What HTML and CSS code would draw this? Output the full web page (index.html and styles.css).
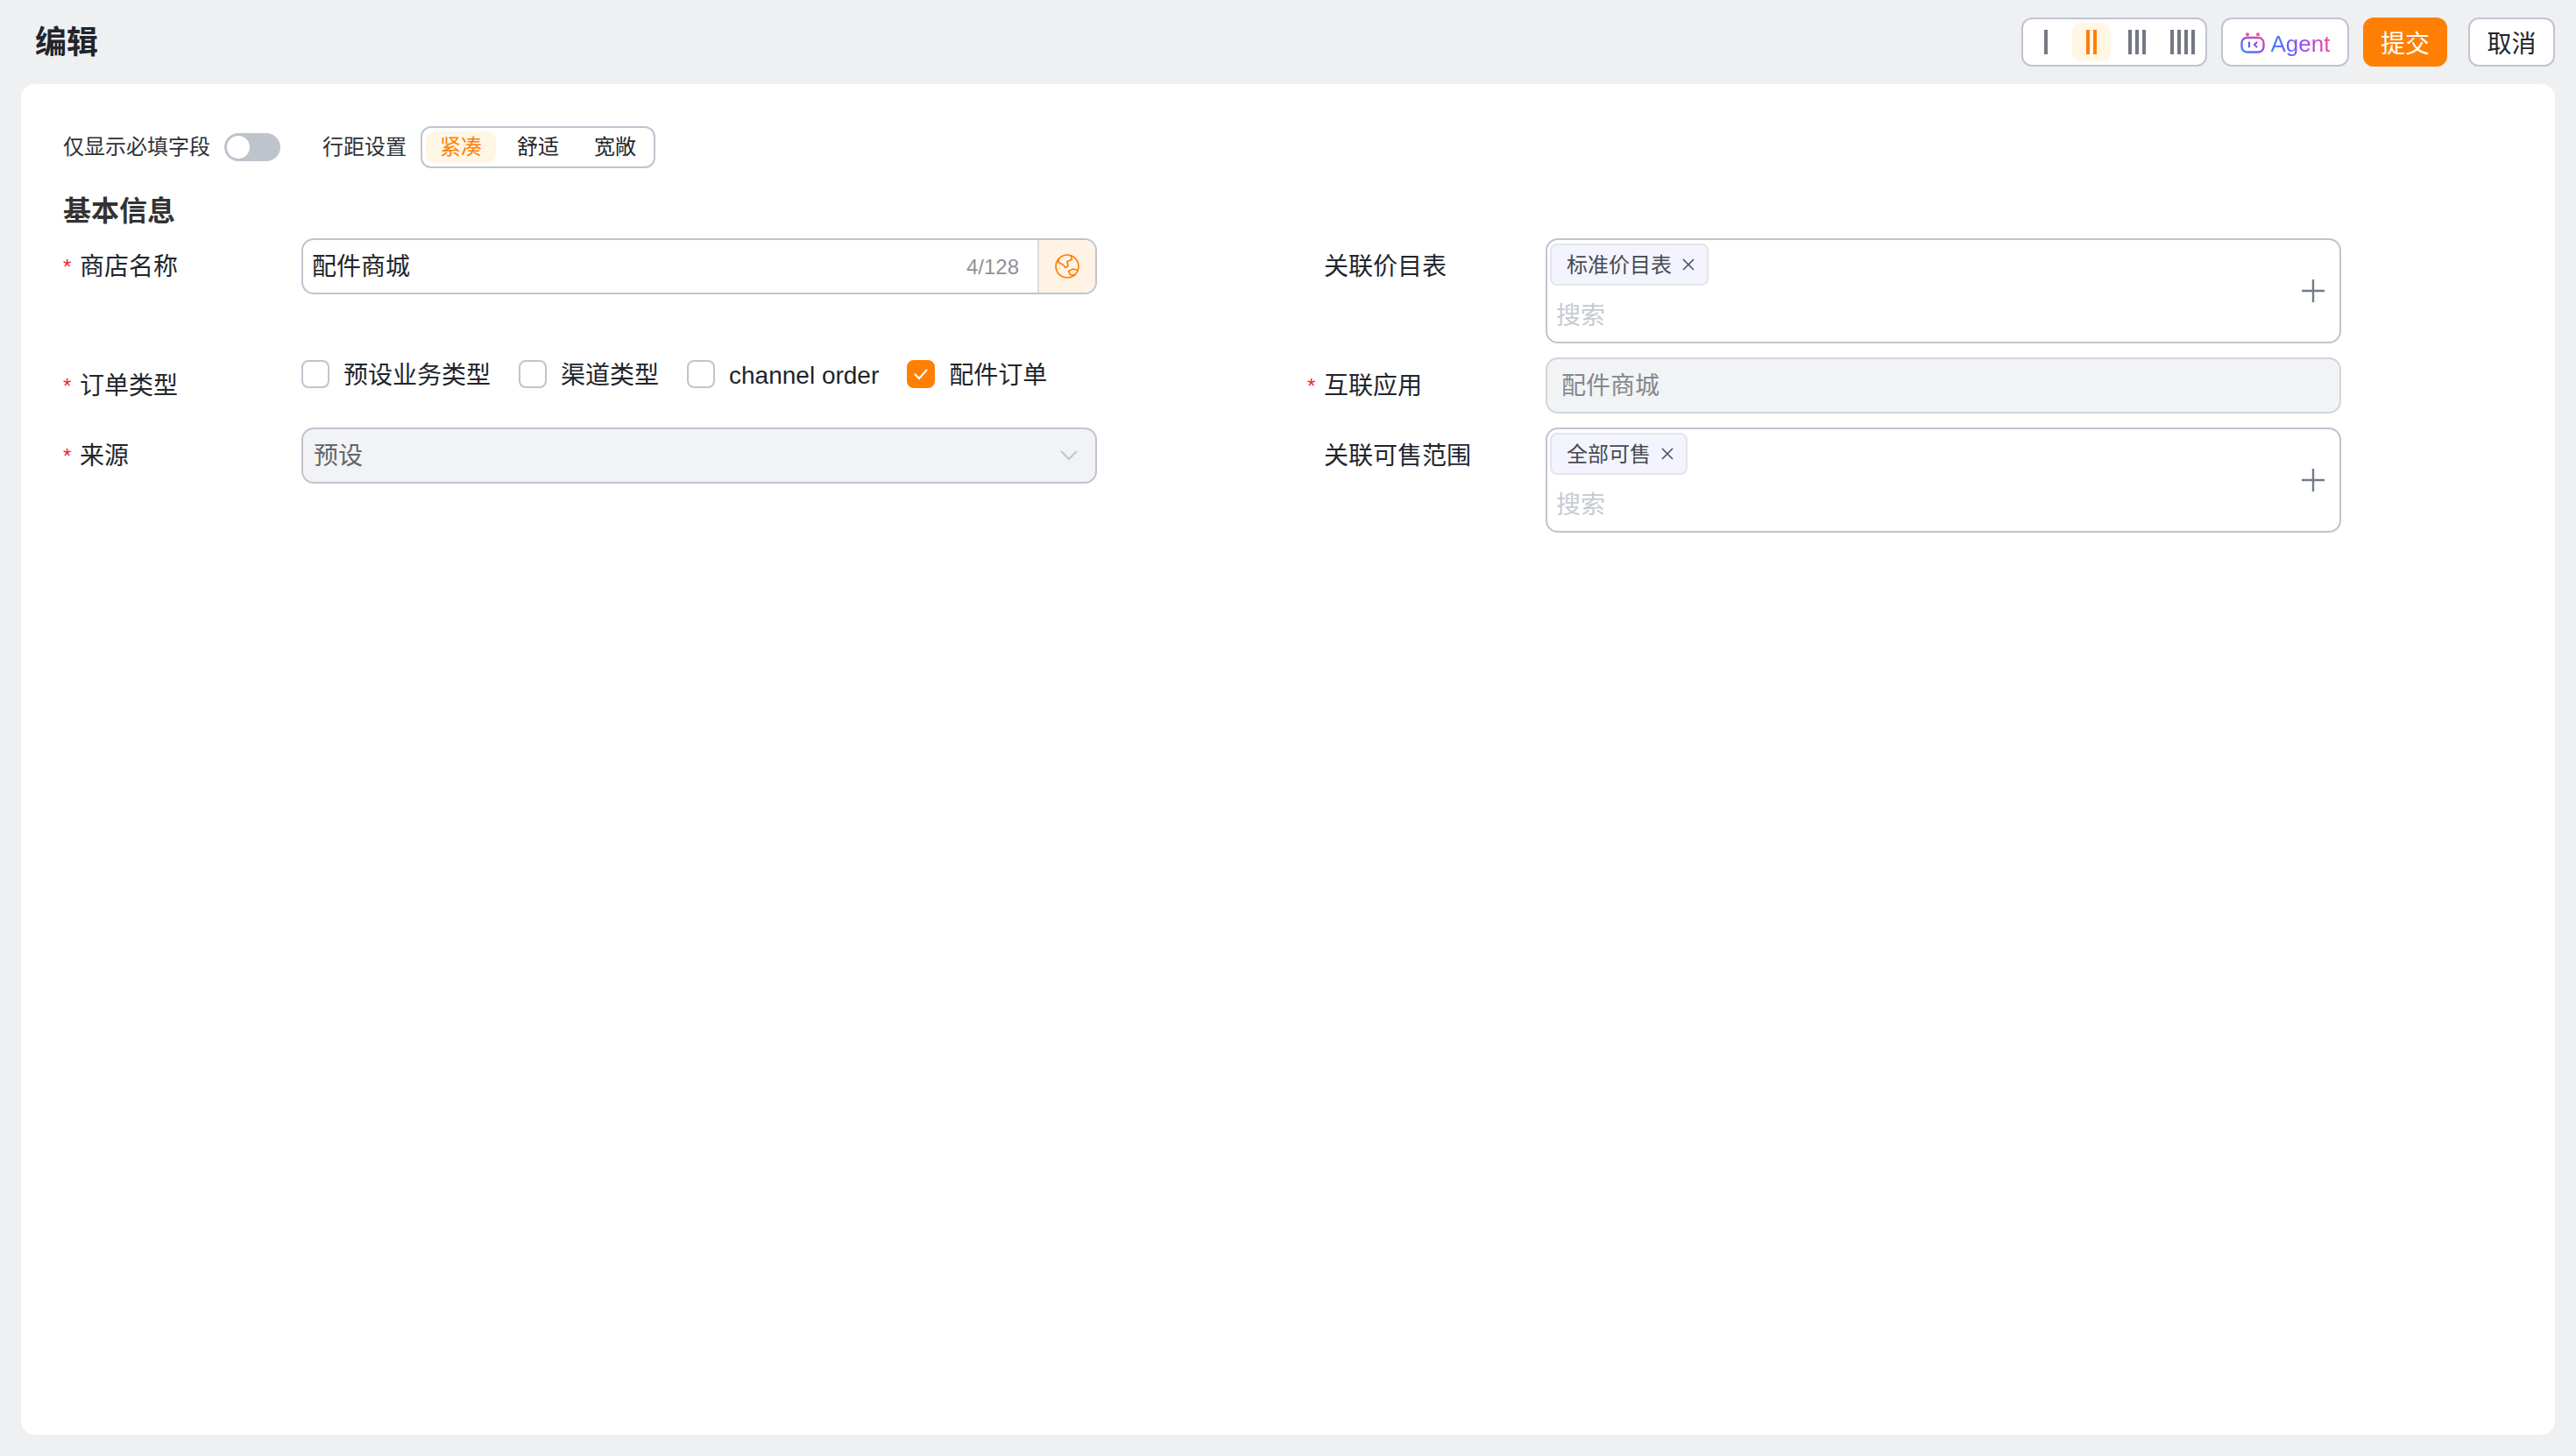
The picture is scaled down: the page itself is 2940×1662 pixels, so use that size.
FILE: index.html
```html
<!DOCTYPE html>
<html lang="zh-CN">
<head>
<meta charset="utf-8">
<title>编辑</title>
<link rel="stylesheet" href="styles.css">
</head>
<body>
<div class="page">
  <header class="topbar">
    <h1 class="page-title">编辑</h1>
    <div class="actions">
      <div class="columns-switch">
        <div class="col-opt"><i></i></div>
        <div class="col-opt active"><i></i><i></i></div>
        <div class="col-opt"><i></i><i></i><i></i></div>
        <div class="col-opt"><i></i><i></i><i></i><i></i></div>
      </div>
      <button class="btn btn-agent">
        <svg class="agent-icon" width="28" height="24" viewBox="0 0 28 24" fill="none">
          <defs><linearGradient id="ag" x1="0" y1="1" x2="1" y2="0"><stop offset="0" stop-color="#2f8cff"/><stop offset=".5" stop-color="#8a4df5"/><stop offset="1" stop-color="#f0489c"/></linearGradient></defs>
          <rect x="1.5" y="6" width="25" height="16.5" rx="6" stroke="url(#ag)" stroke-width="2.4"/>
          <circle cx="8" cy="2.2" r="2" fill="#e9548f"/><circle cx="20" cy="2.2" r="2" fill="#e9548f"/>
          <path d="M10 11.5v5" stroke="#5b62f0" stroke-width="2.2" stroke-linecap="round"/>
          <path d="M18.5 11.5l-2.6 2.5 2.6 2.5" stroke="#9a4ae8" stroke-width="2.2" stroke-linecap="round" stroke-linejoin="round"/>
        </svg>
        <span class="agent-text">Agent</span>
      </button>
      <button class="btn btn-primary">提交</button>
      <button class="btn btn-cancel">取消</button>
    </div>
  </header>

  <main class="card">
    <div class="toolbar">
      <span class="tool-label">仅显示必填字段</span>
      <span class="toggle"><span class="knob"></span></span>
      <span class="tool-label tool-label-spaced">行距设置</span>
      <div class="segmented">
        <span class="seg active">紧凑</span>
        <span class="seg">舒适</span>
        <span class="seg">宽敞</span>
      </div>
    </div>

    <h2 class="section-title">基本信息</h2>

    <div class="form-grid">
      <div class="field">
        <label class="label"><span class="star">*</span>商店名称</label>
        <div class="input-box">
          <span class="input-value">配件商城</span>
          <span class="counter">4/128</span>
          <span class="suffix">
            <svg width="28" height="28" viewBox="0 0 28 28" fill="none" stroke="#ff7f05" stroke-width="1.7" stroke-linejoin="round" stroke-linecap="round">
              <circle cx="14" cy="14" r="13"/>
              <path d="M4.5 5L4 9.5 9 12l3 3.5 3-2-1-5 5.5-2.5L18 1.7"/>
              <path d="M26.2 18.8L21 17l-5.5 2.5 2 4 5.3.7"/>
            </svg>
          </span>
        </div>
      </div>

      <div class="field">
        <label class="label"><span class="star"></span>关联价目表</label>
        <div class="tag-box">
          <div class="tag-main">
            <span class="tag"><span class="tag-text">标准价目表</span>
              <svg class="tag-x" width="14" height="14" viewBox="0 0 14 14" fill="none" stroke="#4b515b" stroke-width="1.6"><path d="M1 1l12 12M13 1L1 13"/></svg>
            </span>
            <span class="placeholder">搜索</span>
          </div>
          <svg class="plus" width="26" height="26" viewBox="0 0 26 26" fill="none" stroke="#737b8a" stroke-width="2.4"><path d="M13 0v26M0 13h26"/></svg>
        </div>
      </div>

      <div class="field">
        <label class="label"><span class="star">*</span>订单类型</label>
        <div class="checks">
          <span class="check-item"><span class="checkbox"></span><span class="check-text">预设业务类型</span></span>
          <span class="check-item"><span class="checkbox"></span><span class="check-text">渠道类型</span></span>
          <span class="check-item"><span class="checkbox"></span><span class="check-text">channel order</span></span>
          <span class="check-item"><span class="checkbox checked">
            <svg width="20" height="16" viewBox="0 0 20 16" fill="none" stroke="#fff" stroke-width="2.2"><path d="M3 8l5 5 9-10"/></svg>
          </span><span class="check-text">配件订单</span></span>
        </div>
      </div>

      <div class="field">
        <label class="label"><span class="star">*</span>互联应用</label>
        <div class="input-box disabled-light"><span class="input-value muted">配件商城</span></div>
      </div>

      <div class="field">
        <label class="label"><span class="star">*</span>来源</label>
        <div class="input-box disabled">
          <span class="input-value select-value">预设</span>
          <svg class="chevron" width="20" height="12" viewBox="0 0 20 12" fill="none" stroke="#c0c4cf" stroke-width="2"><path d="M1 1l9 9 9-9"/></svg>
        </div>
      </div>

      <div class="field">
        <label class="label"><span class="star"></span>关联可售范围</label>
        <div class="tag-box">
          <div class="tag-main">
            <span class="tag"><span class="tag-text">全部可售</span>
              <svg class="tag-x" width="14" height="14" viewBox="0 0 14 14" fill="none" stroke="#4b515b" stroke-width="1.6"><path d="M1 1l12 12M13 1L1 13"/></svg>
            </span>
            <span class="placeholder">搜索</span>
          </div>
          <svg class="plus" width="26" height="26" viewBox="0 0 26 26" fill="none" stroke="#737b8a" stroke-width="2.4"><path d="M13 0v26M0 13h26"/></svg>
        </div>
      </div>
    </div>
  </main>
</div>
</body>
</html>
```

FILE: styles.css
```css
* { box-sizing: border-box; }
html, body { margin: 0; height: 100%; }
body {
  background: #eff0f2;
  color: #21252c;
  font-family: "Liberation Sans", "Noto Sans CJK SC", sans-serif;
  font-size: 28px;
}
.page { height: 1662px; display: flex; flex-direction: column; padding: 0 24px 24px; }

.topbar { height: 96px; flex: none; display: flex; align-items: center; justify-content: space-between; padding: 0 0 0 16px; }
.page-title { margin: 2px 0 0; font-size: 36px; font-weight: 700; line-height: 48px; }
.actions { display: flex; align-items: center; }

.columns-switch {
  display: flex; gap: 8px; height: 56px; padding: 4px; align-items: center;
  background: #fff; border: 2px solid #c0c4cf; border-radius: 12px; margin-right: 16px;
}
.col-opt { width: 44px; height: 44px; border-radius: 10px; display: flex; align-items: center; justify-content: center; gap: 4px; }
.col-opt i { display: block; width: 4px; height: 28px; background: #737882; }
.col-opt.active { background: #fff6e6; }
.col-opt.active i { background: #ff7f05; }

.btn { height: 56px; border-radius: 12px; font: inherit; font-size: 28px; display: flex; align-items: center; justify-content: center; padding: 0; border: 2px solid #c0c4cf; background: #fff; color: #21252c; }
.btn-agent { width: 146px; gap: 7px; margin-right: 16px; }
.agent-icon { margin-top: 1px; }
.agent-text {
  font-size: 26px; line-height: 34px; margin-top: 3px;
  background: linear-gradient(90deg, #3d7fff 0%, #8a4df5 50%, #f0489c 100%);
  -webkit-background-clip: text; background-clip: text; color: transparent;
}
.btn-primary { width: 96px; background: #ff7f05; border-color: #ff7f05; color: #fff; margin-right: 24px; }
.btn-cancel { width: 99px; }

.card { flex: 1; background: #fff; border-radius: 16px; padding: 48px 48px 0; }

.toolbar { display: flex; align-items: center; height: 48px; font-size: 24px; }
.tool-label { line-height: 36px; color: #2d3138; }
.tool-label-spaced { margin-left: 48px; margin-right: 16px; }
.toggle { width: 64px; height: 32px; margin-left: 16px; border-radius: 16px; background: #bfc3cc; padding: 3px; display: flex; }
.knob { width: 26px; height: 26px; border-radius: 50%; background: #fff; }
.segmented { display: flex; gap: 8px; height: 48px; padding: 4px; align-items: center; border: 2px solid #c0c4cf; border-radius: 12px; }
.seg { width: 80px; height: 36px; line-height: 36px; text-align: center; border-radius: 10px; }
.seg.active { background: #fff6e6; color: #ff7f05; }

.section-title { margin: 24px 0 8px; height: 48px; font-size: 32px; line-height: 50px; font-weight: 600; color: #333; }

.form-grid { display: grid; grid-template-columns: 1180px 1180px; column-gap: 240px; row-gap: 16px; }
.field { display: flex; align-items: flex-start; }
.label { width: 272px; height: 64px; flex: none; display: flex; line-height: 66px; }
.star { width: 19px; flex: none; color: #f5222d; font-size: 24px; line-height: inherit; }

.input-box { width: 908px; height: 64px; display: flex; align-items: center; border: 2px solid #c0c4cf; border-radius: 14px; overflow: hidden; background: #fff; }
.input-value { flex: 1; padding-left: 10px; margin-top: 2px; line-height: 40px; }
.muted { color: #85888f; padding-left: 16px; }
.counter { font-size: 24px; color: #8f929a; margin-right: 21px; margin-top: 2px; }
.suffix { width: 66px; height: 100%; flex: none; display: flex; align-items: center; justify-content: center; background: #fff3e6; border-left: 2px solid #dcdde0; }
.disabled { background: #f2f3f5; }
.disabled-light { background: #f2f3f5; border-color: #d3d5dc; }
.select-value { color: #62666e; padding-left: 12px; }
.chevron { margin-right: 20px; }

.tag-box { width: 908px; height: 120px; display: flex; align-items: center; border: 2px solid #c0c4cf; border-radius: 14px; padding: 4px 17px 4px 3px; }
.tag-main { flex: 1; height: 100%; display: flex; flex-direction: column; align-items: flex-start; }
.tag { height: 48px; display: flex; align-items: center; gap: 12px; padding: 0 14px 0 17px; background: #f3f4fd; border: 2px solid #e3e5ec; border-radius: 8px; font-size: 24px; color: #464b54; white-space: nowrap; }
.tag-text { margin-top: -3px; }
.placeholder { margin-top: 15px; margin-left: 7px; line-height: 40px; color: #c6cad2; }
.plus { flex: none; }

.checks { display: flex; gap: 32px; }
.check-item { display: flex; align-items: center; gap: 16px; height: 32px; margin-top: 3px; line-height: 32px; white-space: nowrap; }
.check-text { margin-top: 3px; }
.checkbox { width: 32px; height: 32px; flex: none; border: 2px solid #c0c4cf; border-radius: 8px; background: #fff; display: flex; align-items: center; justify-content: center; }
.checkbox.checked { background: #ff7f05; border-color: #ff7f05; }
```
